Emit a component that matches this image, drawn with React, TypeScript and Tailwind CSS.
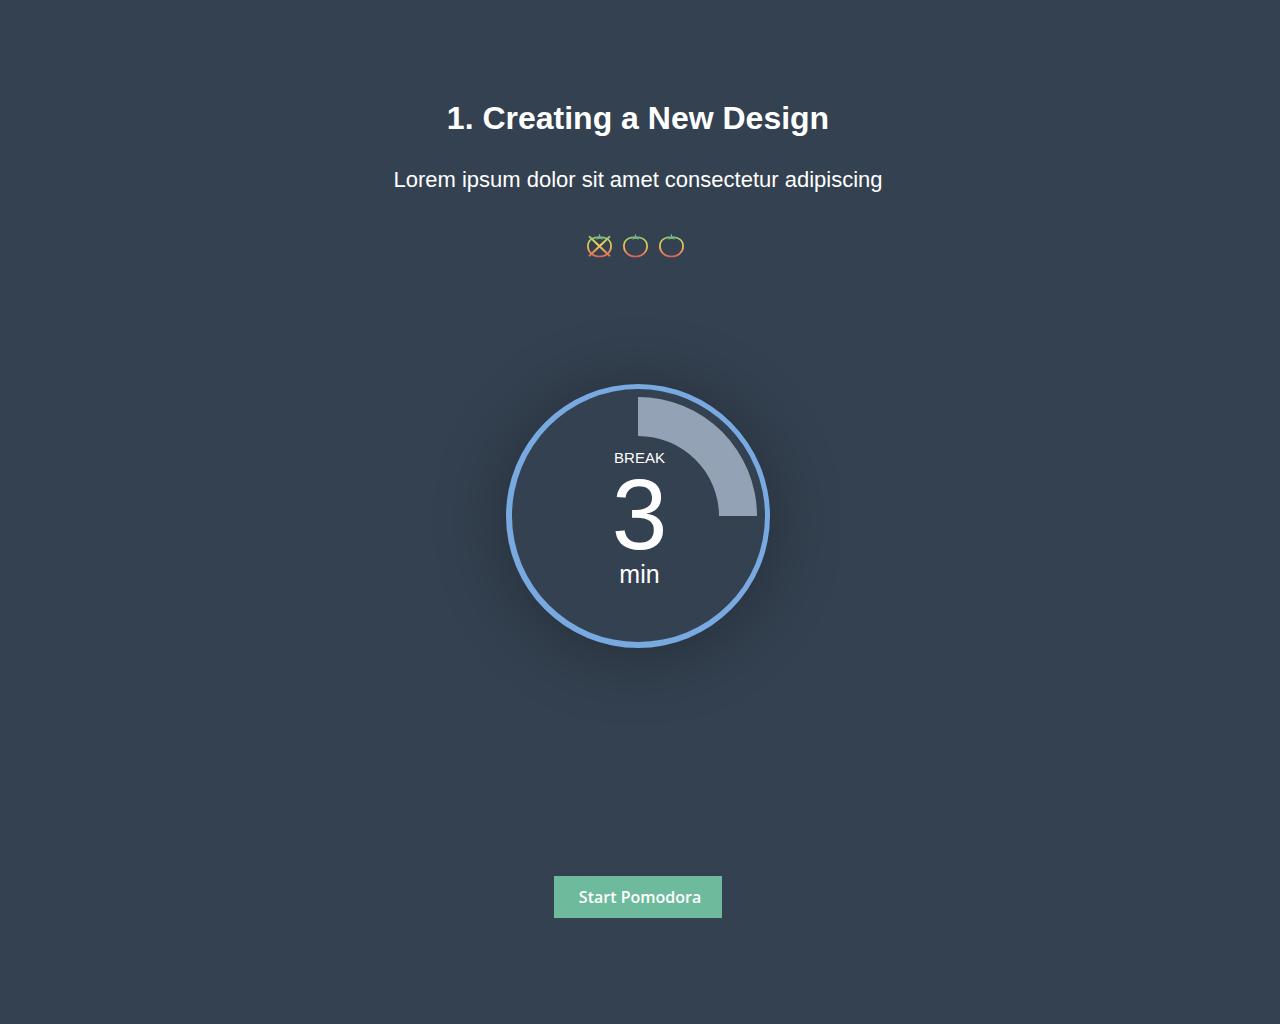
function Tomato({ id, crossed = false }: { id: string; crossed?: boolean }) {
  return (
    <svg viewBox="0 0 26 24" className="h-6 w-[26px]" fill="none" role="img" aria-label={crossed ? 'Finished pomodoro' : 'Remaining pomodoro'}>
      <defs>
        <linearGradient id={id} gradientUnits="userSpaceOnUse" x1="0" y1="1" x2="0" y2="23">
          <stop offset="0" stopColor="#67b283" />
          <stop offset="0.14" stopColor="#a5c76d" />
          <stop offset="0.42" stopColor="#efd552" />
          <stop offset="0.65" stopColor="#eda955" />
          <stop offset="1" stopColor="#d9605a" />
        </linearGradient>
      </defs>
      <g stroke={`url(#${id})`}>
        <path strokeWidth="1.7" d="M13.500 3.800C11.500 3.100 9.500 3.200 7.500 4C4 5.300 1.900 8.400 1.900 12.200C1.900 18 6.900 22.500 13.500 22.500S25.100 18 25.100 12.200C25.100 8.400 23 5.300 19.500 4C17.500 3.200 15.500 3.100 13.500 3.800Z" />
        {crossed && <path strokeWidth="2" d="M3 2.300L24 22.300M24 2.300L3 22.300" />}
      </g>
      <path fill="#79b884" d="M13 0.300H14L14.200 2.600L18 3.200L15.800 4L17.100 5.800L13.500 4.600L9.900 5.800L11.200 4L9 3.200L12.800 2.600Z" />
    </svg>
  );
}

function BreakTimer() {
  return (
    <section
      aria-label="Break timer"
      className="grid size-[264px] place-items-center rounded-full border-t-[5px] border-r-[5px] border-b-[6px] border-l-[6px] border-[#78a9e1] bg-[#344150] shadow-[0_5px_72px_rgba(0,0,0,0.3)]"
    >
      <svg viewBox="0 0 253 253" className="col-start-1 row-start-1 size-full" aria-hidden="true">
        <path fill="#93a3b5" d="M126 8A119 119 0 0 1 245 127H207A81 80 0 0 0 126 47Z" />
      </svg>
      <div className="col-start-1 row-start-1 flex flex-col items-center pt-1 pl-0.5 text-white">
        <span className="text-[15px] leading-4">BREAK</span>
        <span className="text-[100px] leading-24">3</span>
        <span className="text-[25px] leading-6">min</span>
      </div>
    </section>
  );
}

export default function App() {
  return (
    <main className="flex min-h-screen flex-col items-center bg-[#344150] pt-24 pr-1 pb-24 font-['Liberation_Sans',Arial,sans-serif] text-white">
      <h1 className="text-center text-[32px] leading-11 font-bold">1. Creating a New Design</h1>
      <p className="mt-6 text-center text-[22px] leading-8">Lorem ipsum dolor sit amet consectetur adipiscing</p>
      <div className="mt-[38px] mr-1.5 flex gap-2.5">
        <Tomato id="tomato-1" crossed />
        <Tomato id="tomato-2" />
        <Tomato id="tomato-3" />
      </div>
      <div className="mt-[126px]">
        <BreakTimer />
      </div>
      <button
        type="button"
        className="mt-[228px] h-[42px] w-[168px] cursor-pointer bg-[#6dbb9c] pl-1 font-['Open_Sans',sans-serif] text-base font-semibold text-white"
      >
        Start Pomodora
      </button>
    </main>
  );
}
